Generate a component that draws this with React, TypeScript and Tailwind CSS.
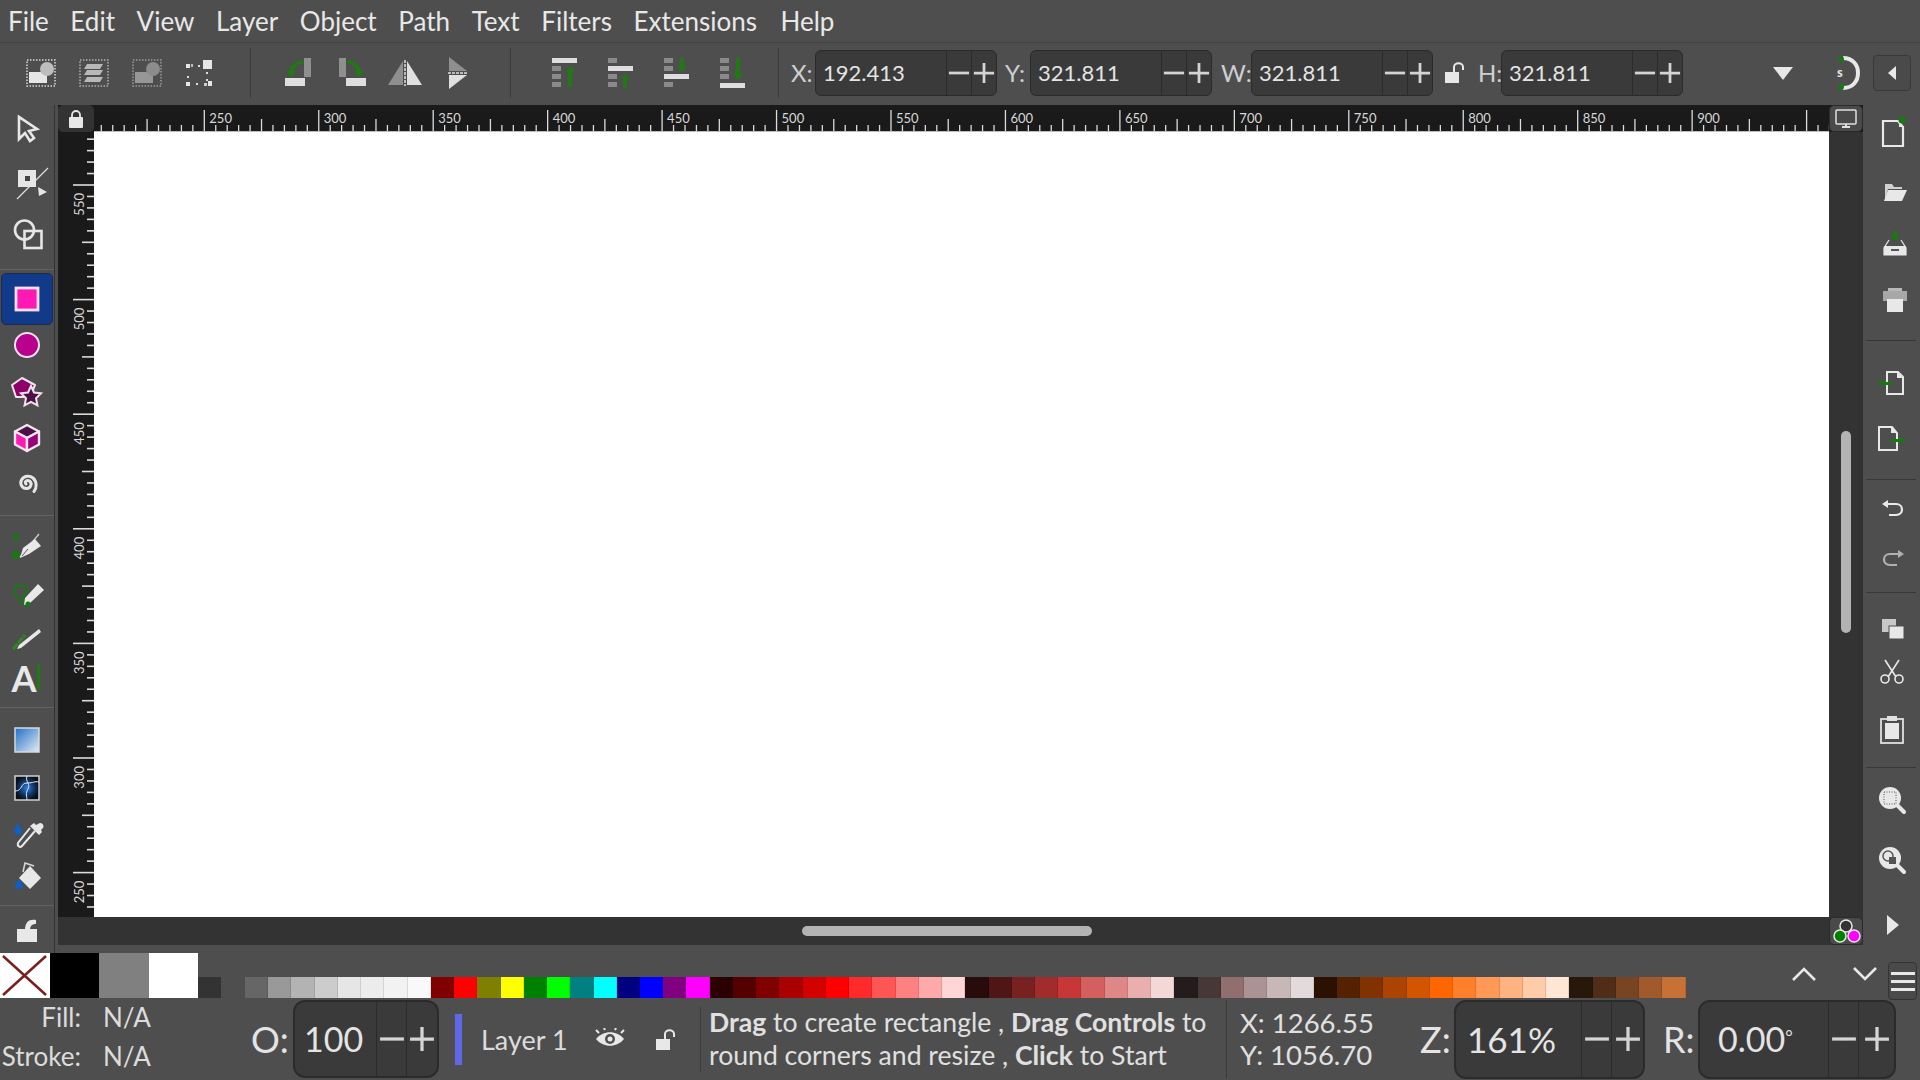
// App.tsx
import React from "react";

const MENU = ["File", "Edit", "View", "Layer", "Object", "Path", "Text", "Filters", "Extensions", "Help"];

const SWATCHES = [
  "#666666", "#999999", "#b3b3b3", "#cccccc", "#e6e6e6", "#ececec", "#f2f2f2", "#f9f9f9",
  "#800000", "#ff0000", "#808000", "#ffff00", "#008000", "#00ff00", "#008080", "#00ffff", "#000080", "#0000ff", "#800080", "#ff00ff",
  "#2b0000", "#550000", "#800000", "#aa0000", "#d40000", "#ff0000", "#ff2a2a", "#ff5555", "#ff8080", "#ffaaaa", "#ffd5d5",
  "#280b0b", "#501616", "#782121", "#a02c2c", "#c83737", "#d35f5f", "#de8787", "#e9afaf", "#f4d7d7",
  "#241c1c", "#483737", "#916f6f", "#ac9393", "#c8b7b7", "#e3dbdb",
  "#2b1100", "#552200", "#803300", "#aa4400", "#d45500", "#ff6600", "#ff7f2a", "#ff9955", "#ffb380", "#ffccaa", "#ffe6d5",
  "#28170b", "#502d16", "#784421", "#a05a2c", "#c87137",
];

const HTICK = 11.445;
const VTICK = 11.46;

// 32x32 box, drawn a little past the edges where the reference does
const Svg = ({ children, w = 32, h = 32 }: { children: React.ReactNode; w?: number; h?: number }) => (
  <svg width={w} height={h} viewBox={`0 0 ${w} ${h}`} className="overflow-visible shrink-0">
    {children}
  </svg>
);

const DottedBox = ({ c = "#d8d8d8" }: { c?: string }) => (
  <rect x="1" y="1" width="28" height="26" fill="none" stroke={c} strokeWidth="1.5" strokeDasharray="1.5 1.5" />
);

const SelectAllIcon = () => (
  <Svg w={30} h={28}>
    <DottedBox />
    <rect x="3" y="13" width="18" height="11" fill="#e6e6e6" />
    <circle cx="21" cy="10" r="7" fill="#bdbdbd" />
  </Svg>
);
const LayersIcon = () => (
  <Svg w={30} h={28}>
    <DottedBox c="#b0b0b0" />
    <path d="M8 5h16l-3 5H5zM8 11h16l-3 5H5zM8 18h16l-3 5H5z" fill="#b8b8b8" />
  </Svg>
);
const DeselectIcon = () => (
  <Svg w={30} h={28}>
    <DottedBox c="#9a9a9a" />
    <rect x="3" y="13" width="18" height="11" fill="#979797" />
    <circle cx="21" cy="10" r="7" fill="#8c8c8c" />
  </Svg>
);
const HandlesIcon = () => (
  <Svg w={30} h={28}>
    <rect x="18" y="1" width="9" height="9" fill="#e6e6e6" />
    <rect x="1" y="5" width="4" height="4" fill="#e6e6e6" />
    <rect x="6" y="5" width="2" height="3" fill="#bbb" />
    <rect x="13" y="6" width="2" height="2" fill="#ddd" />
    <rect x="21" y="13" width="2" height="2" fill="#ddd" />
    <rect x="2" y="17" width="2" height="2" fill="#ddd" />
    <rect x="21" y="20" width="2" height="2" fill="#ddd" />
    <rect x="1" y="23" width="4" height="4" fill="#e6e6e6" />
    <rect x="11" y="24" width="2" height="2" fill="#ddd" />
    <rect x="19" y="24" width="3" height="3" fill="#ccc" />
    <rect x="23" y="22" width="4" height="5" fill="#e6e6e6" />
  </Svg>
);
const RotateCcwIcon = () => (
  <Svg w={28} h={30}>
    <rect x="19" y="0" width="7" height="19" fill="#8f8f8f" />
    <rect x="0" y="20" width="20" height="8" fill="#dedede" />
    <path d="M18 4C11 4 6 9 6 15" fill="none" stroke="#1f7a12" strokeWidth="3.500" />
    <path d="M1 13h10l-5 6z" fill="#1f7a12" />
  </Svg>
);
const RotateCwIcon = () => (
  <Svg w={28} h={30}>
    <rect x="1" y="0" width="7" height="19" fill="#8f8f8f" />
    <rect x="8" y="20" width="20" height="8" fill="#dedede" />
    <path d="M9 4c7 0 12 5 12 11" fill="none" stroke="#1f7a12" strokeWidth="3.500" />
    <path d="M16 13h10l-5 6z" fill="#1f7a12" />
  </Svg>
);
const FlipHIcon = () => (
  <Svg w={34} h={26}>
    <path d="M15 1v24H0z" fill="#8f8f8f" />
    <path d="M19 1v24h15z" fill="#e0e0e0" />
    <path d="M17 0v26" stroke="#dedede" strokeWidth="1.5" strokeDasharray="3 1" />
  </Svg>
);
const FlipVIcon = () => (
  <Svg w={20} h={32}>
    <path d="M1 0l18 14H1z" fill="#8f8f8f" />
    <path d="M1 32l18-14H1z" fill="#e0e0e0" />
    <path d="M0 16h20" stroke="#dedede" strokeWidth="1.5" strokeDasharray="3 1" />
  </Svg>
);

const Block = ({ y }: { y: number }) => <rect x="0" y={y} width="9" height="5" fill="#8a8a8a" />;
const Arrow = ({ d }: { d: string }) => <path d={d} fill="#1f7a12" />;

const AlignTopIcon = () => (
  <Svg w={26} h={30}>
    <rect x="0" y="0" width="25" height="5" fill="#dedede" />
    <Block y={8} /><Block y={16} /><Block y={24} />
    <Arrow d="M13 14l5-6 5 6h-3v15h-4V14z" />
  </Svg>
);
const AlignTopMidIcon = () => (
  <Svg w={26} h={30}>
    <Block y={0} />
    <rect x="0" y="8" width="25" height="5" fill="#dedede" />
    <Block y={16} /><Block y={24} />
    <Arrow d="M12 21l5-5 5 5h-3v9h-4v-9z" />
  </Svg>
);
const AlignBottomMidIcon = () => (
  <Svg w={26} h={30}>
    <Block y={0} /><Block y={8} />
    <rect x="0" y="16" width="25" height="5" fill="#dedede" />
    <Block y={24} />
    <Arrow d="M13 8l5 6 5-6h-3V0h-4v8z" />
  </Svg>
);
const AlignBottomIcon = () => (
  <Svg w={26} h={30}>
    <Block y={0} /><Block y={8} /><Block y={16} />
    <rect x="0" y="25" width="25" height="5" fill="#dedede" />
    <Arrow d="M13 15l5 7 5-7h-3V0h-4v15z" />
  </Svg>
);

const SelectorIcon = () => (
  <Svg w={24} h={28}>
    <path d="M3 2v22l6-6 5 8 4-3-5-7 8-2z" fill="none" stroke="#e8e8e8" strokeWidth="2.6" strokeLinejoin="miter" />
  </Svg>
);
const NodeIcon = () => (
  <Svg>
    <path d="M6 32L37 1" stroke="#dcdcdc" strokeWidth="1.2" />
    <rect x="7" y="3" width="18" height="17" fill="#e6e6e6" />
    <rect x="14" y="9" width="5" height="5" fill="#444" />
    <path d="M27 20l9 5-8 4z" fill="#e6e6e6" />
  </Svg>
);
const ShapesIcon = () => (
  <Svg>
    <circle cx="13.5" cy="13" r="9.5" fill="none" stroke="#e6e6e6" strokeWidth="2.6" />
    <rect x="13.5" y="14" width="17" height="17" fill="none" stroke="#e6e6e6" strokeWidth="2.6" />
  </Svg>
);
const RectIcon = () => (
  <Svg w={26} h={26}>
    <rect x="2" y="2" width="22" height="22" fill="#ff19b4" stroke="#f3e0ec" strokeWidth="2.8" />
  </Svg>
);
const EllipseIcon = () => (
  <Svg w={28} h={28}>
    <circle cx="14" cy="14" r="12" fill="#b9008c" stroke="#f3e3ee" strokeWidth="2" />
  </Svg>
);
const StarIcon = () => (
  <Svg w={34} h={30}>
    <path d="M12 1L2 8l4 12 14 0 5-12z" fill="#8d0069" stroke="#f0e4ec" strokeWidth="2" strokeLinejoin="round" />
    <path d="M21 9l3 6.5 7 .8-5 5 1.4 7-6.4-3.5-6.4 3.5L16 21.300l-5-5 7-.8z" fill="#4d0f47" stroke="#f0e4ec" strokeWidth="2" />
  </Svg>
);
const BoxIcon = () => (
  <Svg w={30} h={30}>
    <path d="M15 2l12 6.500-12 6.500L3 8.500z" fill="#4d0f47" stroke="#f3e6ee" strokeWidth="2.400" strokeLinejoin="round" />
    <path d="M3 8.500l12 6.500v13L3 21.500z" fill="#ff19b4" stroke="#f3e6ee" strokeWidth="2.400" strokeLinejoin="round" />
    <path d="M27 8.500l-12 6.500v13l12-6.500z" fill="#9a0078" stroke="#f3e6ee" strokeWidth="2.400" strokeLinejoin="round" />
  </Svg>
);
const SpiralIcon = () => (
  <Svg w={24} h={24}>
    <path d="M11 13c-2-2 1-4.500 3.500-3 3 2 1.500 7.500-3 7.500-4.500 0-7-4.500-5-8.500 2.300-4.300 8-5 11.500-2 4 3.500 4 10 1 13.500" fill="none" stroke="#e6e6e6" strokeWidth="3" strokeLinecap="round" />
  </Svg>
);
const PenIcon = () => (
  <Svg w={32} h={28}>
    <circle cx="5" cy="4" r="3" fill="#167a10" />
    <circle cx="5" cy="22" r="4" fill="#167a10" />
    <path d="M28 1L9 24" stroke="#d0d0d0" strokeWidth="1.200" />
    <path d="M24 6l6 7-12 8-9 4 3-10z" fill="#e8e8e8" />
    <path d="M11 23l6-7" stroke="#555" strokeWidth="1" />
  </Svg>
);
const PencilIcon = () => (
  <Svg w={32} h={28}>
    <path d="M16 24C8 20 2 12 4 6c1-4 8-4 11 0 3 5-4 6-3 10 0 2 3 3 6 7" fill="none" stroke="#167a10" strokeWidth="2" />
    <path d="M27 2l6 6-14 13-6 2 1-7z" fill="#e8e8e8" />
    <circle cx="17" cy="22" r="2.500" fill="#167a10" />
  </Svg>
);
const CalligraphyIcon = () => (
  <Svg w={30} h={24}>
    <path d="M1 21L13 7" stroke="#2b8a1e" strokeWidth="3" strokeDasharray="7 1" />
    <path d="M27 1L7 17l-2 4 4-1L29 4z" fill="#e8e8e8" />
  </Svg>
);
const GradientIcon = () => (
  <svg width="26" height="26" className="shrink-0">
    <defs>
      <linearGradient id="grad" x1="0" y1="0" x2="1" y2="1">
        <stop offset="0" stopColor="#1f6fc4" />
        <stop offset="1" stopColor="#e3edf7" />
      </linearGradient>
    </defs>
    <rect x="1" y="1" width="24" height="24" fill="url(#grad)" stroke="#d8d8d8" strokeWidth="1.500" />
  </svg>
);
const MeshIcon = () => (
  <svg width="26" height="26" className="shrink-0">
    <defs>
      <radialGradient id="mesh">
        <stop offset="0" stopColor="#2f7fe0" />
        <stop offset="0.6" stopColor="#103568" />
        <stop offset="1" stopColor="#0a1018" />
      </radialGradient>
    </defs>
    <rect x="1" y="1" width="24" height="24" fill="url(#mesh)" stroke="#cfcfcf" strokeWidth="1.500" />
    <path d="M1 16c8 0 5-8 12-8s7-2 12-1M13 1c-2 6 4 8 1 13s-1 7-1 11" fill="none" stroke="#e8e8e8" strokeWidth="1" />
  </svg>
);
const DropperIcon = () => (
  <Svg w={32} h={30}>
    <path d="M7 3c2 4 4 6 4 8 0 5-8 5-8 0 0-2 2-4 4-8z" fill="#0f5fc4" />
    <g transform="translate(4 0)">
      <path d="M20 11L7 26c-2 2-5 0-4-3l12-15" fill="none" stroke="#e8e8e8" strokeWidth="2" />
      <path d="M15 6l9 9 3-3-1-2 2-2c2-3-2-7-5-4l-2 1-2-2z" fill="#e8e8e8" />
    </g>
  </Svg>
);
const BucketIcon = () => (
  <Svg w={32} h={34}>
    <path d="M19 6l11 12-11 11L8 18z" fill="#e8e8e8" />
    <path d="M12 12l2-9 9 3" fill="none" stroke="#d8d8d8" strokeWidth="1.500" />
    <path d="M8 19c2 3 4 5 4 7 0 4-8 4-8 0 0-2 2-4 4-7z" fill="#0f5fc4" />
  </Svg>
);
// narrow body with the shackle swung out to the right
const OpenLockIcon = () => (
  <svg width="20" height="21" viewBox="0 0 20 21" className="shrink-0">
    <rect x="0" y="10" width="14" height="11" fill="#e8e8e8" />
    <path d="M9 10V5c0-5 9-5 9 0v3" fill="none" stroke="#e8e8e8" strokeWidth="2" />
  </svg>
);
const ToolLockIcon = () => (
  <svg width="22" height="24" viewBox="0 0 22 24" className="shrink-0">
    <rect x="1" y="11" width="20" height="13" fill="#e8e8e8" />
    <path d="M9 12c0-8 4-11 11-10v4c-4 0-6 2-6 6z" fill="#e8e8e8" />
  </svg>
);

const NewIcon = () => (
  <Svg w={24} h={28}>
    <path d="M2 2h15l5 6v19H2z" fill="#4e4e4e" stroke="#e8e8e8" strokeWidth="2.200" />
    <path d="M16 2h2v6h4z" fill="#e8e8e8" />
    <circle cx="21" cy="1" r="3.500" fill="#167a10" />
  </Svg>
);
const OpenIcon = () => (
  <Svg w={24} h={18}>
    <path d="M2 1h7l2 3h8v2H5L2 18z" fill="#d0d0d0" />
    <path d="M5 7h19l-5 11H1z" fill="#e8e8e8" />
  </Svg>
);
const SaveIcon = () => (
  <Svg w={22} h={24}>
    <path d="M5 9L0 17v7h22v-7l-5-8" fill="none" stroke="#e8e8e8" strokeWidth="1.200" />
    <path d="M0 15h22v9H0z" fill="#e8e8e8" />
    <rect x="7" y="18" width="8" height="2" fill="#555" />
    <path d="M9 5V0h4v5h2l-4 6-4-6z" fill="#167a10" />
  </Svg>
);
const PrintIcon = () => (
  <Svg w={24} h={24}>
    <rect x="5" y="0" width="14" height="3" fill="#b8b8b8" />
    <rect x="0" y="3" width="24" height="10" fill="#a8a8a8" />
    <rect x="4" y="11" width="16" height="13" fill="#e8e8e8" />
  </Svg>
);
const ImportIcon = () => (
  <Svg w={30} h={24}>
    <path d="M10 1h11l5 5v17H10z" fill="none" stroke="#e8e8e8" strokeWidth="2" />
    <path d="M20 1l6 6h-6z" fill="#e8e8e8" />
    <path d="M1 12l6-3v2h8v3H7v2z" fill="#167a10" />
  </Svg>
);
const ExportIcon = () => (
  <Svg w={30} h={24}>
    <path d="M2 1h13l5 6v17H2z" fill="none" stroke="#e8e8e8" strokeWidth="2" />
    <path d="M14 1l6 6h-6z" fill="#e8e8e8" />
    <path d="M29 14l-6-3v2h-9v3h9v2z" fill="#167a10" />
  </Svg>
);
const UndoIcon = ({ c = "#e8e8e8" }: { c?: string }) => (
  <Svg w={22} h={16}>
    <path d="M4 4h10c8 0 8 11 0 11H7" fill="none" stroke={c} strokeWidth="2.200" />
    <path d="M0 4l6-4v8z" fill={c} />
  </Svg>
);
const RedoIcon = () => (
  <Svg w={22} h={16}>
    <path d="M18 4H8c-8 0-8 11 0 11h7" fill="none" stroke="#b0b0b0" strokeWidth="2.200" />
    <path d="M22 4l-6-4v8z" fill="#b0b0b0" />
  </Svg>
);
const CopyIcon = () => (
  <Svg w={22} h={20}>
    <rect x="0" y="0" width="14" height="13" fill="#c8c8c8" />
    <rect x="7" y="7" width="15" height="13" fill="#e8e8e8" stroke="#4e4e4e" strokeWidth="1" />
  </Svg>
);
const CutIcon = () => (
  <Svg w={24} h={24}>
    <path d="M5 0l11 17M19 0L8 17" stroke="#e8e8e8" strokeWidth="1.600" />
    <circle cx="5" cy="19" r="4" fill="none" stroke="#e8e8e8" strokeWidth="1.600" />
    <circle cx="19" cy="19" r="4" fill="none" stroke="#e8e8e8" strokeWidth="1.600" />
  </Svg>
);
const PasteIcon = () => (
  <Svg w={24} h={28}>
    <rect x="1" y="3" width="22" height="24" fill="none" stroke="#e0e0e0" strokeWidth="1.800" />
    <rect x="5" y="7" width="14" height="16" fill="#e8e8e8" />
    <rect x="7" y="0" width="10" height="5" fill="#e0e0e0" />
  </Svg>
);
const ZoomPageIcon = () => (
  <Svg w={28} h={28}>
    <path d="M18 18l8 8" stroke="#e8e8e8" strokeWidth="4" strokeLinecap="round" />
    <circle cx="12" cy="12" r="11" fill="#e8e8e8" />
    <rect x="6" y="6" width="12" height="12" fill="none" stroke="#555" strokeWidth="1" strokeDasharray="1 1.500" />
  </Svg>
);
const ZoomSelectionIcon = () => (
  <Svg w={28} h={28}>
    <path d="M18 18l8 8" stroke="#e8e8e8" strokeWidth="4" strokeLinecap="round" />
    <circle cx="12" cy="12" r="11" fill="#e8e8e8" />
    <circle cx="10" cy="10" r="5" fill="none" stroke="#555" strokeWidth="1.500" />
    <rect x="11" y="11" width="7" height="7" fill="#555" />
  </Svg>
);

const Minus = ({ s }: { s: number }) => (
  <svg width={s} height={s} viewBox="0 0 24 24" className="shrink-0">
    <path d="M1 12h22" stroke="#d4d4d4" strokeWidth="3" />
  </svg>
);
const Plus = ({ s }: { s: number }) => (
  <svg width={s} height={s} viewBox="0 0 24 24" className="shrink-0">
    <path d="M1 12h22M12 1v22" stroke="#d4d4d4" strokeWidth="3" />
  </svg>
);

interface SpinProps {
  value: React.ReactNode;
  box: string;
  main: string;
  minus: string;
  plus: string;
  icon: number;
}

// gtk style spin button, the field and its two step buttons
const Spin = ({ value, box, main, minus, plus, icon }: SpinProps) => (
  <div className={`flex shrink-0 items-stretch border border-[#2b2b2b] bg-[#3a3a3a] ${box}`}>
    <div className={`flex items-center leading-none text-[#e4e4e4] ${main}`}>{value}</div>
    <div className={`flex items-center justify-center border-l border-[#2b2b2b] ${minus}`}>
      <Minus s={icon} />
    </div>
    <div className={`flex items-center justify-center border-l border-[#2b2b2b] ${plus}`}>
      <Plus s={icon} />
    </div>
  </div>
);

const TopSpin = ({ value }: { value: string }) => (
  <Spin
    value={value}
    box="w-[182px] h-[46px] rounded-[6px]"
    main="w-[131px] pl-[7px] text-[22px]"
    minus="w-[25px]"
    plus="w-[25px]"
    icon={22}
  />
);

const TopBtn = ({ children }: { children: React.ReactNode }) => (
  <div className="flex h-[53px] w-[53px] shrink-0 items-center justify-center">{children}</div>
);
const TopBtnWide = ({ children }: { children: React.ReactNode }) => (
  <div className="flex h-[53px] w-[56px] shrink-0 items-center justify-center">{children}</div>
);
const VSep = ({ className }: { className: string }) => (
  <div className={`h-[50px] w-px shrink-0 bg-[#3c3c3c] ${className}`} />
);
const ToolSep = () => <div className="h-px w-full shrink-0 bg-[#626262]" />;
const SideSep = () => <div className="ml-[3px] h-px w-[50px] shrink-0 bg-[#383838]" />;

const Slot = ({ className, children }: { className: string; children: React.ReactNode }) => (
  <div className={`flex w-full shrink-0 items-center justify-center ${className}`}>{children}</div>
);

const TopRuler = () => {
  const ticks = Array.from({ length: 162 }, (_, i) => i - 10);
  return (
    <svg width="1735" height="27" viewBox="94 0 1735 27" className="block flex-1">
      {ticks.map((i) => {
        const x = 204.3 + i * HTICK;
        const major = ((i % 10) + 10) % 10 === 0;
        const mid = ((i % 5) + 5) % 5 === 0;
        return <line key={i} x1={x} x2={x} y1={major ? 5 : mid ? 14 : 20} y2={26} stroke="#dcdcdc" strokeWidth="1.300" />;
      })}
      {Array.from({ length: 14 }, (_, i) => (
        <text key={i} x={204.3 + i * HTICK * 10 + 5} y="18" fontFamily="Lato, sans-serif" fontSize="13" fill="#d8d8d8">
          {250 + i * 50}
        </text>
      ))}
      <line x1="94" x2="1829" y1="26.500" y2="26.500" stroke="#bdbdbd" />
    </svg>
  );
};

const LeftRuler = () => {
  const ticks = Array.from({ length: 72 }, (_, i) => i - 5);
  return (
    <svg width="36" height="785" viewBox="0 132 36 785" className="block shrink-0">
      {ticks.map((i) => {
        const y = 185 + i * VTICK;
        const major = ((i % 10) + 10) % 10 === 0;
        const mid = ((i % 5) + 5) % 5 === 0;
        return <line key={i} x1={major ? 15 : mid ? 24 : 29} x2={36} y1={y} y2={y} stroke="#dcdcdc" strokeWidth="1.600" />;
      })}
      {Array.from({ length: 7 }, (_, i) => {
        const y = 185 + i * VTICK * 10 + 8;
        return (
          <text key={i} transform={`translate(26 ${y}) rotate(-90)`} textAnchor="end" fontFamily="Lato, sans-serif" fontSize="13" fill="#d8d8d8">
            {550 - i * 50}
          </text>
        );
      })}
    </svg>
  );
};

export default function App() {
  return (
    <div className="flex h-[1080px] w-[1920px] flex-col overflow-hidden bg-[#4e4e4e] font-[Lato,sans-serif] text-[#e8e8e8]">
      {/* menu bar */}
      <div className="flex h-[43px] shrink-0 items-center gap-[21.600px] border-b border-[#444444] pl-[8px] text-[26px] leading-none">
        {MENU.map((m) => (
          <span key={m} className="last:ml-[2px]">{m}</span>
        ))}
      </div>

      {/* command toolbar */}
      <div className="flex h-[62px] shrink-0 items-center pb-[3px] pl-[14px]">
        <TopBtn><SelectAllIcon /></TopBtn>
        <TopBtn><LayersIcon /></TopBtn>
        <TopBtn><DeselectIcon /></TopBtn>
        <TopBtn><HandlesIcon /></TopBtn>
        <VSep className="ml-[24px]" />
        <div className="ml-[21px] flex">
          <TopBtn><RotateCcwIcon /></TopBtn>
          <TopBtn><RotateCwIcon /></TopBtn>
          <TopBtn><FlipHIcon /></TopBtn>
          <TopBtn><FlipVIcon /></TopBtn>
        </div>
        <VSep className="ml-[26px]" />
        <div className="ml-[26px] flex">
          <TopBtnWide><AlignTopIcon /></TopBtnWide>
          <TopBtnWide><AlignTopMidIcon /></TopBtnWide>
          <TopBtnWide><AlignBottomMidIcon /></TopBtnWide>
          <TopBtnWide><AlignBottomIcon /></TopBtnWide>
        </div>
        <VSep className="ml-[17px]" />
        <span className="ml-[12px] w-[24px] text-[24px] leading-none text-[#cfcfcf]">X:</span>
        <TopSpin value="192.413" />
        <span className="ml-[8px] w-[25px] text-[24px] leading-none text-[#cfcfcf]">Y:</span>
        <TopSpin value="321.811" />
        <span className="ml-[9px] w-[30px] text-[24px] leading-none text-[#cfcfcf]">W:</span>
        <TopSpin value="321.811" />
        <div className="ml-[12px] w-[32px] shrink-0"><OpenLockIcon /></div>
        <span className="ml-px mr-px w-[22px] text-[24px] leading-none text-[#cfcfcf]">H:</span>
        <TopSpin value="321.811" />
        <svg width="20" height="14" className="ml-[90px] shrink-0">
          <path d="M0 1h20L10 14z" fill="#e8e8e8" />
        </svg>
        <svg width="28" height="34" viewBox="0 0 28 34" className="ml-[41px] shrink-0">
          <path d="M9 2c10 0 15 7 15 15s-5 15-15 15" fill="none" stroke="#e8e8e8" strokeWidth="4" />
          <circle cx="7" cy="3" r="3" fill="#167a10" />
          <circle cx="7" cy="31" r="3" fill="#167a10" />
          <text x="3" y="21" fontFamily="Lato, sans-serif" fontSize="13" fontWeight="700" fill="#e8e8e8">s</text>
        </svg>
        <div className="ml-[11px] flex h-[36px] w-[38px] shrink-0 items-center justify-center rounded-[4px] border border-[#383838] bg-[#4a4a4a]">
          <svg width="8" height="14"><path d="M8 0v14L0 7z" fill="#e8e8e8" /></svg>
        </div>
      </div>

      {/* main area */}
      <div className="flex h-[840px] shrink-0">
        {/* tool box */}
        <div className="z-10 flex h-[848px] w-[55px] shrink-0 flex-col border-r border-[#333333]">
          <Slot className="h-[48px] pl-[2px]"><SelectorIcon /></Slot>
          <Slot className="h-[60px]"><NodeIcon /></Slot>
          <Slot className="h-[40px]"><ShapesIcon /></Slot>
          <div className="mt-[16px]"><ToolSep /></div>
          <div className="ml-px mt-[3px] flex h-[52px] w-[52px] shrink-0 items-center justify-center rounded-[5px] border border-[#1d2b4a] bg-[#123a8a]">
            <RectIcon />
          </div>
          <Slot className="h-[40px]"><EllipseIcon /></Slot>
          <Slot className="h-[54px]"><StarIcon /></Slot>
          <Slot className="h-[38px]"><BoxIcon /></Slot>
          <Slot className="h-[52px]"><SpiralIcon /></Slot>
          <div className="mt-[6px]"><ToolSep /></div>
          <Slot className="h-[62px]"><PenIcon /></Slot>
          <Slot className="h-[36px]"><PencilIcon /></Slot>
          <Slot className="h-[52px]"><CalligraphyIcon /></Slot>
          <Slot className="h-[24px]">
            <span className="relative -ml-[6px] text-[36px] font-bold leading-none text-[#e8e8e8]">
              A
              <span className="absolute left-[26px] top-[4px] h-[26px] w-[3px] bg-[#1f7a12]" />
            </span>
          </Slot>
          <div className="mt-[17px]"><ToolSep /></div>
          <Slot className="h-[64px]"><GradientIcon /></Slot>
          <Slot className="h-[32px]"><MeshIcon /></Slot>
          <Slot className="h-[62px]"><DropperIcon /></Slot>
          <Slot className="h-[22px]"><BucketIcon /></Slot>
          <div className="mt-[17px]"><ToolSep /></div>
          <Slot className="h-[48px]"><ToolLockIcon /></Slot>
        </div>

        {/* canvas with rulers and scrollbars */}
        <div className="ml-[3px] flex w-[1805px] shrink-0 flex-col">
          <div className="flex h-[27px] shrink-0 bg-[#1a1a1a]">
            <div className="flex w-[36px] shrink-0 items-center justify-center rounded-[5px] bg-[#333333]">
              <svg width="14" height="18" viewBox="0 0 14 18">
                <rect x="0" y="7" width="14" height="11" rx="1" fill="#e8e8e8" />
                <path d="M3 7V5a4 4 0 0 1 8 0v2" fill="none" stroke="#e8e8e8" strokeWidth="1.800" />
              </svg>
            </div>
            <TopRuler />
            <div className="flex w-[34px] shrink-0 items-center justify-center rounded-[5px] border border-[#2a2a2a] bg-[#4a4a4a]">
              <svg width="22" height="20" viewBox="0 0 22 20">
                <rect x="1" y="1" width="20" height="14" rx="1" fill="none" stroke="#e0e0e0" strokeWidth="1.500" />
                <path d="M7 18h8M11 15v3" stroke="#e0e0e0" strokeWidth="2" />
              </svg>
            </div>
          </div>
          <div className="flex min-h-0 flex-1">
            <div className="overflow-hidden bg-[#1a1a1a]"><LeftRuler /></div>
            <div className="flex-1 bg-white" />
            <div className="w-[34px] shrink-0 bg-[#333333] pl-[12px] pt-[299px]">
              <div className="h-[202px] w-[10px] rounded-full bg-[#b3b3b3]" />
            </div>
          </div>
          <div className="flex h-[28px] shrink-0 items-center bg-[#333333]">
            <div className="ml-[744px] h-[10px] w-[290px] rounded-full bg-[#b3b3b3]" />
            <div className="ml-auto flex h-[28px] w-[34px] shrink-0 items-center justify-center rounded-[5px] border border-[#2a2a2a] bg-[#4a4a4a]">
              <svg width="30" height="26" viewBox="0 0 30 26">
                <circle cx="15" cy="8" r="6" fill="#333" stroke="#e8e8e8" strokeWidth="1.500" />
                <circle cx="9" cy="18" r="6" fill="#008000" stroke="#e8e8e8" strokeWidth="1.500" />
                <circle cx="23" cy="18" r="6" fill="#ff00ff" stroke="#e8e8e8" strokeWidth="1.500" />
              </svg>
            </div>
          </div>
        </div>

        {/* command bar */}
        <div className="flex w-[57px] shrink-0 flex-col">
          <Slot className="h-[56px] pl-[3px]"><NewIcon /></Slot>
          <Slot className="h-[62px] pl-[6px]"><OpenIcon /></Slot>
          <Slot className="h-[40px] pl-[6px]"><SaveIcon /></Slot>
          <Slot className="h-[74px] pl-[6px]"><PrintIcon /></Slot>
          <div className="mt-[3px]"><SideSep /></div>
          <Slot className="h-[84px]"><ImportIcon /></Slot>
          <Slot className="h-[26px]"><ExportIcon /></Slot>
          <div className="mt-[28px]"><SideSep /></div>
          <Slot className="h-[56px] pl-[2px]"><UndoIcon /></Slot>
          <Slot className="h-[44px] pl-[2px]"><RedoIcon /></Slot>
          <div className="mt-[12px]"><SideSep /></div>
          <Slot className="mt-[14px] h-[44px] pl-[2px]"><CopyIcon /></Slot>
          <Slot className="h-[42px]"><CutIcon /></Slot>
          <Slot className="h-[74px]"><PasteIcon /></Slot>
          <SideSep />
          <Slot className="h-[64px]"><ZoomPageIcon /></Slot>
          <Slot className="h-[56px]"><ZoomSelectionIcon /></Slot>
          <Slot className="mt-[17px] h-[40px] pl-[2px]">
            <svg width="12" height="20"><path d="M0 0l12 10L0 20z" fill="#e8e8e8" /></svg>
          </Slot>
        </div>
      </div>

      {/* palette */}
      <div className="flex h-[55px] shrink-0 items-end pb-[2px]">
        <div className="relative h-[45px] w-[50px] shrink-0 bg-white">
          <svg width="50" height="45" className="absolute left-0 top-0">
            <path d="M3 3l43 39M46 3L3 42" stroke="#7a1f1f" strokeWidth="2.500" />
          </svg>
        </div>
        <div className="h-[45px] w-[49px] shrink-0 bg-black" />
        <div className="h-[45px] w-[50px] shrink-0 bg-[#808080]" />
        <div className="h-[45px] w-[49px] shrink-0 bg-white" />
        <div className="h-[21px] w-[23px] shrink-0 bg-[#333333]" />
        <div className="ml-[24px] flex h-[21px] w-[1441px] shrink-0">
          {SWATCHES.map((c, i) => (
            <div key={i} className="flex-1 border-r border-black/10" style={{ backgroundColor: c }} />
          ))}
        </div>
        <svg width="24" height="14" viewBox="0 0 24 14" className="mb-[17px] ml-[106px] shrink-0">
          <path d="M1 13L12 2l11 11" fill="none" stroke="#e8e8e8" strokeWidth="2.600" />
        </svg>
        <svg width="24" height="14" viewBox="0 0 24 14" className="mb-[17px] ml-[37px] shrink-0">
          <path d="M1 1l11 11L23 1" fill="none" stroke="#e8e8e8" strokeWidth="2.600" />
        </svg>
        <div className="mb-[-2px] ml-[11px] flex h-[38px] w-[29px] shrink-0 flex-col items-center justify-center gap-[5px] rounded-[4px] border border-[#333333] bg-[#4a4a4a]">
          <div className="h-[3px] w-[24px] bg-[#e8e8e8]" />
          <div className="h-[3px] w-[24px] bg-[#e8e8e8]" />
          <div className="h-[3px] w-[24px] bg-[#e8e8e8]" />
        </div>
      </div>

      {/* status bar */}
      <div className="flex h-[80px] shrink-0 items-center pb-[2px]">
        <div className="-mt-[5px] grid w-[155px] shrink-0 grid-cols-[81px_1fr] gap-x-[22px] gap-y-[9px] text-[26px] leading-[30px] text-[#dcdcdc]">
          <span className="text-right">Fill:</span>
          <span>N/A</span>
          <span className="text-right">Stroke:</span>
          <span>N/A</span>
        </div>
        <span className="ml-[96px] w-[42px] shrink-0 text-[36px] leading-none text-[#e4e4e4]">O:</span>
        <Spin
          value="100"
          box="w-[146px] h-[78px] rounded-[12px] border-2"
          main="w-[81px] pl-[9px] text-[34px]"
          minus="w-[30px]"
          plus="w-[31px]"
          icon={26}
        />
        <div className="ml-[16px] h-[51px] w-[7px] shrink-0 bg-[#5f68e6]" />
        <span className="ml-[19px] w-[114px] shrink-0 text-[27px] leading-none text-[#dcdcdc]">Layer 1</span>
        <svg width="30" height="22" viewBox="0 0 30 22" className="shrink-0">
          <path d="M1 11c7-9 21-9 28 0-7 9-21 9-28 0z" fill="#e8e8e8" />
          <circle cx="15" cy="11" r="5" fill="#4e4e4e" />
          <circle cx="15" cy="11" r="2.500" fill="#e8e8e8" />
          <path d="M4 5L1 2M10 2L9 0M20 2l1-2M26 5l3-3" stroke="#e8e8e8" strokeWidth="2" />
        </svg>
        <div className="ml-[31px] shrink-0"><OpenLockIcon /></div>
        <div className="ml-[24px] flex h-[65px] w-px shrink-0 bg-[#3c3c3c]" />
        <div className="ml-[8px] w-[517px] shrink-0 text-[26.600px] leading-[33px] text-[#e0e0e0]">
          <div className="whitespace-nowrap"><b>Drag</b> to create rectangle , <b>Drag Controls</b> to</div>
          <div className="whitespace-nowrap">round corners and resize , <b>Click</b> to Start</div>
        </div>
        <div className="h-full w-px shrink-0 bg-[#3c3c3c]" />
        <div className="ml-[13px] w-[180px] shrink-0 text-[27.500px] leading-[32px] text-[#e0e0e0]">
          <div>X: 1266.55</div>
          <div>Y: 1056.70</div>
        </div>
        <span className="w-[34px] shrink-0 text-[36px] leading-none text-[#e4e4e4]">Z:</span>
        <Spin
          value="161%"
          box="w-[191px] h-[79px] rounded-[12px] border-2"
          main="w-[126px] pl-[11px] text-[35px]"
          minus="w-[31px]"
          plus="w-[32px]"
          icon={26}
        />
        <span className="ml-[18px] w-[35px] shrink-0 text-[36px] leading-none text-[#e4e4e4]">R:</span>
        <Spin
          value={<span>0.00<sup className="text-[18px]">°</sup></span>}
          box="w-[198px] h-[79px] rounded-[12px] border-2"
          main="w-[129px] pl-[18px] text-[34px]"
          minus="w-[31px]"
          plus="w-[36px]"
          icon={26}
        />
      </div>
    </div>
  );
}
